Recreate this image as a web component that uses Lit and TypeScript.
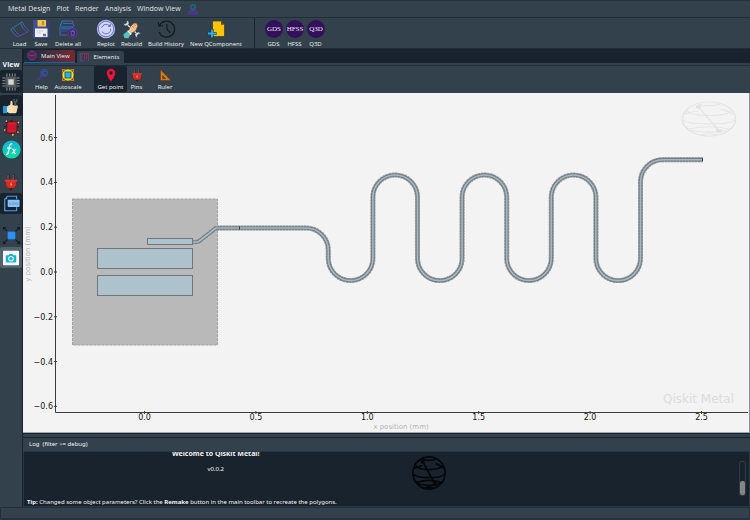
import { LitElement, html, svg, css, nothing } from "lit";
import { customElement, property } from "lit/decorators.js";
import { classMap } from "lit/directives/class-map.js";

const duo = (id: string) => svg`<defs><linearGradient id=${id} x1="0" y1="0" x2="1" y2="1">
  <stop offset="0" stop-color="#1f7fb5"/><stop offset="1" stop-color="#7a35b5"/></linearGradient></defs>`;

const quantumDisc = (label: string) => svg`
  <circle cx="10" cy="10" r="9" fill="#33105c"/>
  <text x="10" y="12" text-anchor="middle" font-family="Liberation Serif, serif" font-size="7" fill="#f0eaf4">${label}</text>`;

const icons: Record<string, { box: number; art: unknown }> = {
  astronaut: { box: 12, art: svg`
    <circle cx="6" cy="4" r="2.5" fill="#22505f" stroke="#237489" stroke-width=".9"/>
    <path d="M3 7.5h6M4 8v3M8 8v3" stroke="#4c3a98" stroke-width="1"/>
    <path d="M1.500 11V9.400Q2 7.600 4 7.400L6 9l2-1.600q2 .2 2.500 2V11z" fill="#45358c" stroke="#573a98" stroke-width=".8"/>` },
  load: { box: 20, art: svg`${duo("gl")}
    <g fill="none" stroke="url(#gl)" stroke-width="1" stroke-linejoin="round">
    <path d="M.8 10.300L3 8.800Q7 15 9.800 16.500L8 18Q3.500 16 .8 10.300z"/>
    <path d="M10.200 4L12 2.800Q14.500 8.500 19 11.500L17.200 13.300Q12.500 10.500 10.200 4z"/>
    <path d="M3.400 8.500L10.300 4.200M10 16.800l7-3.600"/></g>` },
  save: { box: 20, art: svg`
    <path d="M2 1h13.500L18.500 4v15H2z" fill="#434e92"/><path d="M15.500 1l3 3v15h-2.500V9h-.5z" fill="#353f7a"/>
    <rect x="6.500" y="1" width="8.500" height="6.500" fill="#f7c548"/><rect x="11" y="2" width="2" height="4" fill="#c08a35"/>
    <rect x="4" y="9.500" width="12.500" height="8.500" fill="#eef0f4"/><path d="M6 12h6M6 14h4" stroke="#c0c5d0" stroke-width=".8"/>
    <rect x="12" y="14.800" width="3" height="2.500" fill="#6c7488"/>` },
  trash: { box: 20, art: svg`${duo("gd")}
    <g fill="none" stroke="url(#gd)" stroke-width="1.200">
    <path d="M2 7.500l2.200-5.500h10l2 5.500M5 4.500h9M2 8v3M2 11.500v4.500h7"/></g>
    <path d="M2.200 7h13.400v3.500H2.200z" fill="#24609c"/><path d="M2.200 12h7" stroke="#3a4fa0" stroke-width="1"/>
    <circle cx="14.600" cy="14" r="4.400" fill="#352f60" stroke="#5f369c" stroke-width="1.100"/>
    <path d="M12.400 12.400h4.400M13 12.700l.4 3.600h2.600l.4-3.600M13.900 11.500h1.600" stroke="#7f4fc0" stroke-width=".9" fill="none"/>` },
  replot: { box: 20, art: svg`
    <circle cx="10" cy="10" r="9.200" fill="#b3b7f2"/><circle cx="10" cy="10" r="7.700" fill="#d3d6fd" stroke="#5d62a8" stroke-width=".8"/>
    <path d="M5.600 8.800A4.800 4.800 0 0 1 13.700 6.800M14.600 9.600A4.700 4.700 0 0 1 5.900 12.600" fill="none" stroke="#6a6fc0" stroke-width="1"/>
    <path d="M14.800 4.800v3h-3z" fill="#5358ac"/>` },
  rebuild: { box: 20, art: svg`
    <path d="M4 4.500L16 15.700" stroke="#1d2c36" stroke-width="2.600"/><path d="M4 4.500L16 15.700" stroke="#dfe8ee" stroke-width="1.500"/>
    <path d="M1.200 4.600l2.200.5L4.800 3.600 4.400 1.400Q7.300 1.400 7 4.400 6 7.200 3.200 6.900 1.400 6.400 1.200 4.600z" fill="#dfe8ee" stroke="#26343e" stroke-width=".6"/>
    <path d="M18.800 15.200l-2.100-.4-1.400 1.500.4 2.100q-2.800 0-2.800-2.800.9-2.800 3.700-2.500 2 .4 2.200 2.100z" fill="#dfe8ee" stroke="#26343e" stroke-width=".6"/>
    <path d="M6.500 12L8 8l4-4 2.600.2 1.200 2.800-2 4.600-4.200 2.600z" fill="#f2c494" stroke="#6d4028" stroke-width=".6"/>
    <path d="M9.800 7l2.600 2M11.400 5l2.800 2.200" stroke="#8d5837" stroke-width=".6"/>
    <path d="M1.200 15.600L5 12.600l3.600 3-2.200 3.600H2.600z" fill="#54c3c0"/><path d="M5 12l1.400-.8 3.400 3.400-1 1.600z" fill="#f4f6f4"/>` },
  history: { box: 20, art: svg`<g fill="none" stroke="#15191d" stroke-width="1.200">
    <path d="M3.400 6.600A8 8 0 1 1 3.200 13.200M11 5v5.200l3.400 3.600"/><path d="M2.200 3.200l.8 4.200 4-.9"/></g>` },
  newcomp: { box: 20, art: svg`
    <path d="M6.500 2h8.600l3.400 3.600V17.500h-12z" fill="#fcc30c" stroke="#3b3420" stroke-width=".7"/><path d="M15 2l3.500 3.700H15z" fill="#5f4a10"/>
    <path d="M6 10v9M1.500 14.500h9" stroke="#16303f" stroke-width="3.200"/><path d="M6 10.400v8.200M1.900 14.500h8.200" stroke="#2fb4f2" stroke-width="1.800"/>` },
  gds: { box: 20, art: quantumDisc("GDS") },
  hfss: { box: 20, art: quantumDisc("HFSS") },
  q3d: { box: 20, art: quantumDisc("Q3D") },
  help: { box: 14, art: svg`
    <circle cx="9.200" cy="4.800" r="3.300" fill="#2f3f66" stroke="#3f4c9c" stroke-width="1.200"/>
    <path d="M10.400 3.600a1.700 1.700 0 1 0 .2 2.400" fill="none" stroke="#2f74a8" stroke-width=".8"/>
    <path d="M6.400 7.600L2.800 12" stroke="#4f3b98" stroke-width="1.700"/>` },
  autoscale: { box: 14, art: svg`
    <path d="M1 1h3.400v1.200H2.200v2.200H1zM13 1H9.600v1.200h2.200v2.200H13zM1 13V9.600h1.200v2.200h2.200V13zM13 13V9.600h-1.200v2.200H9.600V13z" fill="#e86a24"/>
    <circle cx="7" cy="7" r="5.700" fill="#fbe413"/><rect x="4" y="4" width="6" height="6" fill="#19b5ea" stroke="#2e5060" stroke-width=".9"/>` },
  pin: { box: 14, art: svg`<path fill-rule="evenodd" fill="#fb1239" d="M7 .8a4.200 4.200 0 0 0-4.200 4.200C2.800 8.200 7 13.400 7 13.400S11.200 8.200 11.200 5A4.200 4.200 0 0 0 7 .8zM7 3.300a1.700 1.700 0 1 1 0 3.400 1.700 1.700 0 0 1 0-3.400z"/>` },
  plug: { box: 14, art: svg`
    <path d="M5 6V1.200M9 6V1.200" stroke="#2c2326" stroke-width="1.700"/><path d="M4.700 5.500V1.500M8.700 5.500V1.500" stroke="#93807c" stroke-width=".6"/>
    <path d="M2.600 5.500h8.800v4L9.500 12h-5L2.600 9.500z" fill="#cf2b2b" stroke="#6d1a20" stroke-width=".6"/>
    <path d="M2.200 5.200h9.600v1.400H2.200z" fill="#dd3b36"/><path d="M7.600 6.800L5.900 9h1l-.4 1.800L8.200 8.500H7.200z" fill="#f0a53a"/><path d="M7 12v1.500" stroke="#1a1f22" stroke-width="1.400"/>` },
  ruler: { box: 14, art: svg`<path fill-rule="evenodd" d="M2.400 1.600L13 12.600H2.400zM4.700 7.700v2.900h2.900z" fill="#d87a1e" stroke="#593617" stroke-width=".6"/>` },
  metal: { box: 12, art: svg`
    <circle cx="7" cy="5.500" r="4.300" fill="#35203f" stroke="#843a86" stroke-width=".9"/>
    <path d="M5 2.500v6M7 1.500v8M9 2.500v6M3.500 5.500h7" stroke="#9a4090" stroke-width=".6"/>` },
  elements: { box: 12, art: svg`
    <path d="M3 2h8v7H3z" fill="#482f4a"/><path d="M2 2.500h9M4 2v6.500M6.300 2v7M8.500 2v6M10.500 2v7.500" stroke="#7c3a60" stroke-width=".9"/>
    <path d="M2.300 3v7h3" fill="none" stroke="#44509c" stroke-width=".9"/>` },
  chip: { box: 20, art: svg`
    <path d="M5.500 .5v19M8.500 .5v19M11.500 .5v19M14.500 .5v19M.5 5.500h19M.5 8.500h19M.5 11.500h19M.5 14.500h19" stroke="#9ba1a4" stroke-width="1"/>
    <rect x="3.500" y="3.500" width="13" height="13" rx="1" fill="#43484b"/><rect x="5" y="5" width="10" height="10" fill="#5c6367"/>
    <rect x="7" y="7" width="6" height="6" fill="#d4d8d9"/>` },
  thumb: { box: 20, art: svg`
    <rect x="0" y="10" width="5" height="9" fill="#2396e6"/>
    <path d="M5 10.500L9 8.500 9.600 3.500q2.200-.4 2.400 2V9h5q1.900.3 1.500 2L17 17.500q-.5 1.500-1.800 1.500H8L5 17.500z" fill="#ffdfb4"/>
    <path d="M15.500 10V5" stroke="#59646c" stroke-width="2"/><path d="M13.800.8v3.200l1.700 1.400 1.800-1.400V.8" fill="none" stroke="#59646c" stroke-width="1.500"/>
    <path d="M13 11.700h5M13 14h4.500M12.500 16.500h4" stroke="#edc492" stroke-width=".6"/>` },
  qchip: { box: 20, art: svg`
    <path d="M3 3l14 14M17 3L3 17M1 9h18M10 1v18" stroke="#171b1e" stroke-width="1.100"/>
    <path d="M5 3h12l-1 13.500H4z" fill="#c8162d" stroke="#50101a" stroke-width=".9"/><path d="M6.500 5.500h8.500M6 14h8" stroke="#e03548" stroke-width=".8"/>
    <g fill="#d9b23c"><circle cx="4" cy="2.500" r="1"/><circle cx="18" cy="4" r="1"/><circle cx="2" cy="13" r="1"/><circle cx="17.500" cy="15.500" r="1"/><circle cx="11.500" cy="18.600" r="1.300"/></g>` },
  fx: { box: 20, art: svg`
    <defs><linearGradient id="gf" x1="0" y1="0" x2="0" y2="1"><stop offset="0" stop-color="#0cb4d8"/><stop offset="1" stop-color="#10dca4"/></linearGradient></defs>
    <circle cx="10" cy="10" r="9.600" fill="url(#gf)"/>
    <path d="M10.800 4.300q-2.200-.8-2.800 2L6.600 13q-.5 2.600-2.400 2.200M5.300 8.600h4.600" fill="none" stroke="#fff" stroke-width="1.400"/>
    <path d="M10.500 9.700q1.300-.4 1.700 1.200l.6 2q.4 1.600 1.900 1M15 9.700q-1 0-2.200 2.200T10.200 14" fill="none" stroke="#fff" stroke-width="1.100"/>` },
  log: { box: 20, art: svg`
    <path d="M4.500 1.500H16v3.500M16 14.500V18.500H2V4.500M2 16q0 3 3 2.500" fill="none" stroke="#4a9de6" stroke-width="1.400"/><path d="M5 1L1.500 5H5z" fill="#4a9de6"/>
    <rect x="5.500" y="5.500" width="14" height="8.500" rx="1" fill="#8cc4f7"/>
    <text x="12.500" y="11.800" text-anchor="middle" font-family="Liberation Sans, sans-serif" font-size="5" font-weight="700" fill="#4f92d4">LOG</text>` },
  expand: { box: 20, art: svg`
    <path d="M2 2l5 5M18 2l-5 5M2 18l5-5M18 18l-5-5" stroke="#14191d" stroke-width="1.100"/>
    <path d="M1 1h3.500L1 4.500zM19 1h-3.500L19 4.500zM1 19h3.500L1 15.500zM19 19h-3.500l3.500-3.500z" fill="#14191d"/>
    <rect x="6" y="6" width="8" height="8" fill="#2f8fef" stroke="#1c5ea8" stroke-width=".5"/>` },
  camera: { box: 20, art: svg`
    <rect x="0" y="1" width="20" height="18" rx="1" fill="#f6f8f8"/>
    <path d="M4.500 6.500H7L8.200 5h3.600L13 6.500h2.500q1 0 1 1v7q0 1-1 1h-11q-1 0-1-1v-7q0-1 1-1z" fill="#13b5c9"/>
    <circle cx="10" cy="11" r="2.800" fill="#13b5c9" stroke="#f6f8f8" stroke-width="1.400"/>` },
};

@customElement("metal-icon")
export class MetalIcon extends LitElement {
  @property() name = "";
  @property({ type: Number }) size = 20;
  static styles = css`:host { display: block; line-height: 0; } svg { display: block; }`;
  render() {
    const icon = icons[this.name];
    return icon
      ? html`<svg width=${this.size} height=${this.size} viewBox="0 0 ${icon.box} ${icon.box}" aria-hidden="true">${icon.art}</svg>`
      : nothing;
  }
}

/* Bloch-sphere emblem on a unit of 40 x 40 */
const globe = svg`
  <circle cx="20" cy="20" r="19"/>
  <path d="M12 3.500Q20 7 28 3.500M4.500 11Q6 16 20 16T35.500 11M1.500 21Q4 25.500 20 25.500T38.500 21M6 31Q20 26.500 34 31M4 30Q8 34.500 20 34.500T36 30M14 37.500Q20 35.500 26 37.500M3 14.500Q6 12 12 11.500M28 9Q34 11 37 15"/>
  <path d="M12.500 6.500L27 33"/>
  <circle class="dot" cx="12.500" cy="6.500" r="1.500"/><circle class="dot" cx="27" cy="33" r="1.800"/>`;

@customElement("design-canvas")
export class DesignCanvas extends LitElement {
  static styles = css`
    :host { display: block; background: #f3f3f3; font-family: "DejaVu Sans", sans-serif; }
    svg { display: block; width: 100%; height: 100%; }
    .axis { stroke: #3c3c3c; fill: none; }
    .tick { font-size: 8px; fill: #141414; }
    .caption { font-size: 7px; fill: #b4b4b4; text-anchor: middle; }
    .brand { font-size: 12px; fill: #dcdcdc; text-anchor: end; }
    .mid { text-anchor: middle; }
    .end { text-anchor: end; }
    .mark { fill: none; stroke: #e3e3e3; stroke-width: 1; }
    .mark .dot { fill: #e0e0e0; }
    .pocket { fill: #b9b9b9; stroke: #a3a3a3; stroke-width: 1; stroke-dasharray: 3 1; }
    .pad { fill: #aec2ce; stroke: #70777b; stroke-width: 1; }
    .line { fill: none; stroke-linejoin: round; }
    .gap { stroke: #c4c4c4; stroke-width: 5; }
    .dash { stroke: #9c9c9c; stroke-width: 5; stroke-dasharray: 2 1; }
    .edge { stroke: #747d81; stroke-width: 3.700; }
    .core { stroke: #a3bac8; stroke-width: 1.600; }
  `;

  private get trace() {
    const r = 22.3;
    let x = 328.3;
    let d = `M192 242H198L216 228H306A${r} ${r} 0 0 1 ${x} 250.300V258.300`;
    for (let i = 0; i < 3; i++) {
      d += `A${r} ${r} 0 0 0 ${x + 2 * r} 258.300V197.300A${r} ${r} 0 0 1 ${x + 4 * r} 197.300V258.300`;
      x += 4 * r;
    }
    return d + `A${r} ${r} 0 0 0 ${x + 2 * r} 258.300V182A${r} ${r} 0 0 1 ${x + 3 * r} 159.700H703`;
  }

  render() {
    const xs = [0, 0.5, 1, 1.5, 2, 2.5];
    const ys = [0.6, 0.4, 0.2, 0, -0.2, -0.4, -0.6];
    const px = (v: number) => 144.5 + v * 222.8;
    const py = (v: number) => 272 - v * 224;
    const label = (v: number) => v.toFixed(1).replace("-", "−");
    return html`<svg viewBox="23 93 726 339" role="img" aria-label="Qubit layout plot">
      <path class="axis" d="M55.500 95V412.500H748"/>
      ${xs.map((v) => svg`<path class="axis" d="M${px(v)} 411v3"/><text class="tick mid" x=${px(v)} y="420">${label(v)}</text>`)}
      ${ys.map((v) => svg`<path class="axis" d="M54 ${py(v)}h3"/><text class="tick end" x="53" y=${py(v) + 3}>${label(v)}</text>`)}
      <text class="caption" x="401" y="429">x position (mm)</text>
      <text class="caption" transform="translate(30 254) rotate(-90)">y position (mm)</text>
      <text class="brand" x="734" y="403">Qiskit Metal</text>
      <g class="mark" transform="translate(681 101) scale(1.400 .9)">${globe}</g>
      <rect class="pocket" x="72.500" y="199" width="145" height="146"/>
      <path class="line gap" d=${this.trace}/><path class="line dash" d=${this.trace}/>
      <path class="line edge" d=${this.trace}/><path class="line core" d=${this.trace}/>
      <path class="axis" d="M239.500 226.500v3M702.500 158v3"/>
      <rect class="pad" x="147.500" y="238.500" width="45" height="6"/>
      <rect class="pad" x="97.500" y="248.500" width="95" height="20"/>
      <rect class="pad" x="97.500" y="275.500" width="95" height="20"/>
    </svg>`;
  }
}

type Tool = { icon: string; label: string; on?: boolean };

@customElement("app-root")
export class AppRoot extends LitElement {
  static styles = css`
    :host { display: flex; flex-direction: column; min-height: 100vh; box-sizing: border-box; background: #32414b;
      color: #f2f3f4; font-family: "Open Sans", "Noto Sans", sans-serif; font-size: 6px; line-height: 10px; }
    * { box-sizing: border-box; }
    button { font: inherit; color: inherit; background: none; border: 0; padding: 0; margin: 0; white-space: nowrap; }
    .menu { display: flex; align-items: center; gap: 6px; height: 18px; padding: 0 8px; font-size: 7px; color: #e0e3e5; border-top: 1px solid #26323c; border-bottom: 1px solid #202c36; }
    .tools { display: grid; align-items: start; }
    .tool { display: flex; flex-direction: column; align-items: center; min-width: 0; }
    .primary { height: 31px; padding: 1px 8px 0; border-bottom: 1px solid #202c36;
      grid-template-columns: 23px 20px 34px 10px 22px 29px 40px 60px 17px 21px 21px 21px; }
    .rule { justify-self: center; width: 1px; height: 31px; margin-top: -1px; background: #1b2630; }
    .body { flex: 1; display: flex; min-height: 0; }
    .side { width: 22px; display: flex; flex-direction: column; align-items: center; padding-top: 11px; }
    .side h2 { margin: 0; font-size: 7px; font-weight: 700; }
    .views { display: flex; flex-direction: column; gap: 1px; width: 100%; margin-bottom: 11px; }
    .view { display: flex; align-items: center; justify-content: center; height: 21px; border-radius: 2px; }
    .view.on { background: #19232d; }
    .view.lit { background: #53636e; }
    .first .view { height: 23px; }
    .first { margin-bottom: 2px; }
    .main { flex: 1; min-width: 0; display: flex; flex-direction: column; border-left: 1px solid #19232d; }
    .tabs { display: flex; align-items: flex-end; gap: 2px; height: 14px; padding-left: 1px; background: #19232d; }
    .tab { display: flex; align-items: center; gap: 4px; height: 12px; padding: 0 5px 0 1px; background: #32414b; border-radius: 2px 2px 0 0; }
    .tab.on { height: 13px; border-bottom: 1px solid #1464a0; background: linear-gradient(100deg, #1c2a3a 10%, #43303d 50%, #7b2735); }
    .band { height: 3px; border-bottom: 1px solid #212d37; }
    .plotbar { height: 27px; padding: 0 11px; grid-template-columns: 15px 38px 7px 33px 19px 8px 22px; }
    .plotbar .tool { padding-top: 2px; height: 26px; border-radius: 2px; }
    .plotbar .on { background: #19232d; }
    design-canvas { flex: 1; min-height: 0; border-right: 1px solid #89929a; border-bottom: 1px solid #a3a8ac; }
    .splitter { height: 5px; border-top: 1px solid #19232d; border-bottom: 1px solid #19232d; }
    .log { font-family: "Noto Sans", "Open Sans", sans-serif; }
    .log h2 { margin: 0; padding: 1px 6px; font-size: 6px; font-weight: 400; white-space: pre; line-height: 11px; }
    .feed { display: flex; height: 56px; background: #19232d; border: 1px solid #2a3741; border-radius: 2px; padding: 0 3px; overflow: hidden; }
    .text { flex: 1; display: flex; flex-direction: column; justify-content: flex-end; }
    .hero { display: grid; grid-template-columns: 53fr 7fr 40fr; text-align: center; }
    .hero h1 { margin: 0 0 5px; font-size: 7px; line-height: 11px; font-weight: 700; }
    .hero p, .tip { margin: 0; }
    .tip { margin-top: 8px; line-height: 8px; }
    .orb { width: 34px; height: 34px; margin-top: 8px; fill: none; stroke: #05080a; stroke-width: 2; justify-self: center; }
    .orb .dot { fill: #05080a; }
    .scroll { align-self: flex-start; width: 7px; height: 35px; margin: 9px 0; padding-top: 19px; border: 1px solid #2c3a45; border-radius: 2px; }
    .thumb { height: 14px; border-radius: 2px; background: #858585; }
    .status { height: 13px; border: 1px solid #222e38; border-bottom: 2px solid #26323c; border-radius: 2px; }
  `;

  private tool(t: Tool, size: number) {
    return html`<button class=${classMap({ tool: true, on: !!t.on })}><metal-icon name=${t.icon} .size=${size}></metal-icon><span>${t.label}</span></button>`;
  }

  private view(icon: string, label: string, size = 20, state = "") {
    return html`<button class="view ${state}" aria-label=${label}><metal-icon name=${icon} .size=${size}></metal-icon></button>`;
  }

  render() {
    return html`
      <nav class="menu">
        ${["Metal Design", "Plot", "Render", "Analysis", "Window View"].map((m) => html`<button>${m}</button>`)}
        <button aria-label="About"><metal-icon name="astronaut" .size=${12}></metal-icon></button>
      </nav>
      <div class="tools primary" role="toolbar">
        ${this.tool({ icon: "load", label: "Load" }, 20)}
        ${this.tool({ icon: "save", label: "Save" }, 20)}
        ${this.tool({ icon: "trash", label: "Delete all" }, 20)}
        <span></span>
        ${this.tool({ icon: "replot", label: "Replot" }, 20)}
        ${this.tool({ icon: "rebuild", label: "Rebuild" }, 20)}
        ${this.tool({ icon: "history", label: "Build History" }, 20)}
        ${this.tool({ icon: "newcomp", label: "New QComponent" }, 20)}
        <span class="rule"></span>
        ${this.tool({ icon: "gds", label: "GDS" }, 20)}
        ${this.tool({ icon: "hfss", label: "HFSS" }, 20)}
        ${this.tool({ icon: "q3d", label: "Q3D" }, 20)}
      </div>
      <div class="body">
        <aside class="side">
          <h2>View</h2>
          <div class="views first">${this.view("chip", "Design", 18, "on")}</div>
          <div class="views">
            ${this.view("thumb", "Variables", 16, "on")}
            ${this.view("qchip", "Components", 17)}
            ${this.view("fx", "Functions", 19)}
          </div>
          <div class="views">
            ${this.view("plug", "Connectors", 18)}
            ${this.view("log", "Log", 17, "on")}
          </div>
          <div class="views">
            ${this.view("expand", "Fit window", 19)}
            ${this.view("camera", "Screenshot", 16, "lit")}
          </div>
        </aside>
        <main class="main">
          <div class="tabs" role="tablist">
            <button class="tab on" role="tab" aria-selected="true"><metal-icon name="metal" .size=${12}></metal-icon>Main View</button>
            <button class="tab" role="tab" aria-selected="false"><metal-icon name="elements" .size=${12}></metal-icon>Elements</button>
          </div>
          <div class="band"></div>
          <div class="tools plotbar" role="toolbar">
            ${this.tool({ icon: "help", label: "Help" }, 14)}
            ${this.tool({ icon: "autoscale", label: "Autoscale" }, 14)}
            <span></span>
            ${this.tool({ icon: "pin", label: "Get point", on: true }, 14)}
            ${this.tool({ icon: "plug", label: "Pins" }, 14)}
            <span></span>
            ${this.tool({ icon: "ruler", label: "Ruler" }, 14)}
          </div>
          <design-canvas></design-canvas>
          <div class="splitter"></div>
          <section class="log">
            <h2>Log  (filter >= debug)</h2>
            <div class="feed">
              <div class="text">
                <div class="hero">
                  <div><h1>Welcome to Qiskit Metal!</h1><p>v0.0.2</p></div>
                  <svg class="orb" viewBox="0 0 40 40" aria-hidden="true">${globe}</svg>
                </div>
                <p class="tip"><b>Tip:</b> Changed some object parameters? Click the <b>Remake</b> button in the main toolbar to recreate the polygons.</p>
              </div>
              <div class="scroll"><div class="thumb"></div></div>
            </div>
          </section>
        </main>
      </div>
      <footer class="status"></footer>
    `;
  }
}
